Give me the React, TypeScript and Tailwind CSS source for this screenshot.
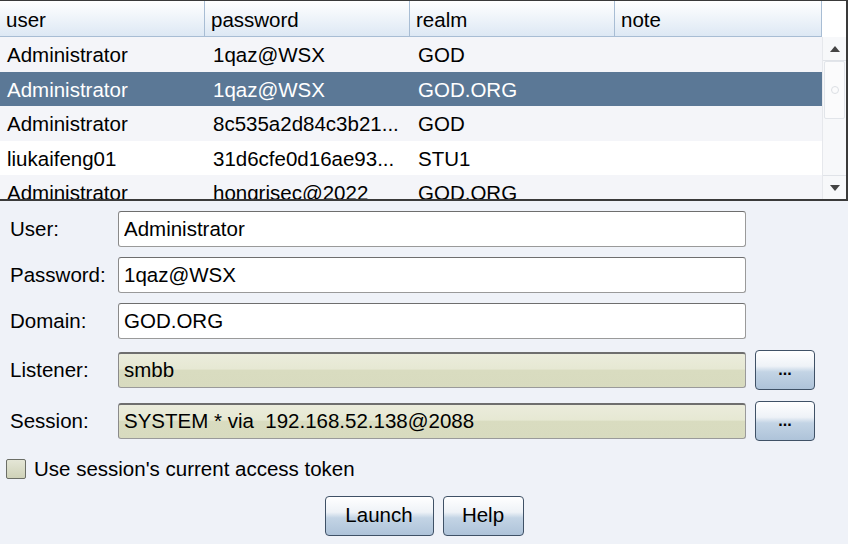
import React from 'react';

const rows = [
  { user: 'Administrator', password: '1qaz@WSX', realm: 'GOD', note: '' },
  { user: 'Administrator', password: '1qaz@WSX', realm: 'GOD.ORG', note: '', selected: true },
  { user: 'Administrator', password: '8c535a2d84c3b21...', realm: 'GOD', note: '' },
  { user: 'liukaifeng01', password: '31d6cfe0d16ae93...', realm: 'STU1', note: '' },
  { user: 'Administrator', password: 'hongrisec@2022', realm: 'GOD.ORG', note: '' },
];

const cols = ['user', 'password', 'realm', 'note'];

function TextField({ value, tinted }: { value: string; tinted?: boolean }) {
  return (
    <div
      className={`flex-1 h-[36px] flex items-center px-[5px] rounded-[3px] border border-[#9a9a9a] border-t-[#6e6e6e] border-l-[#8a8a8a] ${
        tinted ? 'bg-[linear-gradient(#ebecdc_0%,#e6e8d3_45%,#d9dcc0_50%,#d8dbbf_100%)] border-t-2 border-t-[#5e625a]' : 'bg-white'
      }`}
    >
      <span className="truncate whitespace-pre">{value}</span>
    </div>
  );
}

function Button({ children, className }: { children: React.ReactNode; className?: string }) {
  return (
    <button
      className={`h-[40px] rounded-[4px] border border-[#3f5166] bg-[linear-gradient(#ffffff_0%,#eef2f7_40%,#c3d4e5_55%,#aec3d9_100%)] flex items-center justify-center text-black ${className ?? ''}`}
    >
      {children}
    </button>
  );
}

function FormRow({ label, children }: { label: string; children: React.ReactNode }) {
  return (
    <div className="flex items-center">
      <div className="w-[118px] pl-[10px] shrink-0">{label}</div>
      {children}
    </div>
  );
}

export default function App() {
  return (
    <div
      className="w-[848px] h-[544px] bg-[#eff2f8] text-[20.5px] text-black overflow-hidden"
      style={{ fontFamily: '"Liberation Sans", Arial, sans-serif' }}
    >
      {/* table */}
      <div className="h-[201px] border-t border-b-2 border-r-2 border-[#3a3a3a] bg-white flex overflow-hidden">
        <div className="w-[822px] flex flex-col overflow-hidden">
          <div className="h-[36px] shrink-0 flex border-b border-[#a8bdd4] bg-[linear-gradient(#ffffff,#dde8f4)]">
            {cols.map((c, i) => (
              <div
                key={c}
                className={`h-full flex items-center pl-[6px] pt-[3px] border-r border-[#a8bdd4] ${i === 3 ? 'w-[207px]' : 'w-[205px]'}`}
              >
                {c}
              </div>
            ))}
          </div>
          {rows.map((r, i) => (
            <div
              key={i}
              className={`h-[34.5px] shrink-0 flex items-center pt-[3px] ${
                r.selected ? 'bg-[#5b7896] text-white' : i % 2 === 0 ? 'bg-[#f4f5f9]' : 'bg-white'
              }`}
            >
              <div className="w-[205px] pl-[7px] whitespace-nowrap">{r.user}</div>
              <div className="w-[205px] pl-[8px] whitespace-nowrap">{r.password}</div>
              <div className="w-[206px] pl-[8px] whitespace-nowrap">{r.realm}</div>
              <div className="flex-1">{r.note}</div>
            </div>
          ))}
        </div>
        {/* scrollbar */}
        <div className="flex-1 flex flex-col bg-white">
          <div className="h-[36px] shrink-0" />
          <div className="flex-1 flex flex-col bg-[#f7f8fa] border-l border-[#e6e8ec]">
            <div className="h-[24px] flex items-center justify-center border-b border-[#e0e3e8]">
              <svg width="10" height="6" viewBox="0 0 10 6"><path d="M0 6 L5 0 L10 6 Z" fill="#444" /></svg>
            </div>
            <div className="h-[58px] mx-[1px] border border-[#e2e5ea] bg-[#fbfbfc] rounded-[2px] flex items-center justify-center">
              <div className="w-[8px] h-[8px] rounded-full border border-[#dcdfe4]" />
            </div>
            <div className="flex-1" />
            <div className="h-[24px] flex items-center justify-center border-t border-[#e0e3e8]">
              <svg width="10" height="6" viewBox="0 0 10 6"><path d="M0 0 L10 0 L5 6 Z" fill="#444" /></svg>
            </div>
          </div>
        </div>
      </div>

      {/* form */}
      <div className="flex flex-col gap-[10px] pt-[10px] pr-[102px]">
        <FormRow label="User:">
          <TextField value="Administrator" />
        </FormRow>
        <FormRow label="Password:">
          <TextField value="1qaz@WSX" />
        </FormRow>
        <FormRow label="Domain:">
          <TextField value="GOD.ORG" />
        </FormRow>
      </div>
      <div className="flex flex-col gap-[11px] pt-[11px] pr-[33px]">
        <FormRow label="Listener:">
          <TextField value="smbb" tinted />
          <Button className="w-[60px] ml-[9px] text-[16px] font-bold">...</Button>
        </FormRow>
        <FormRow label="Session:">
          <TextField value="SYSTEM * via  192.168.52.138@2088" tinted />
          <Button className="w-[60px] ml-[9px] text-[16px] font-bold">...</Button>
        </FormRow>
      </div>
      <div className="flex items-center gap-[8px] pl-[6px] mt-[13px]">
        <div className="w-[20px] h-[20px] border border-[#6b6e66] rounded-[2px] bg-[linear-gradient(#e4e6d6,#cfd2b8)]" />
        <span>Use session's current access token</span>
      </div>
      <div className="flex justify-center gap-[9px] mt-[11px]">
        <Button className="w-[109px]">Launch</Button>
        <Button className="w-[81px]">Help</Button>
      </div>
    </div>
  );
}
